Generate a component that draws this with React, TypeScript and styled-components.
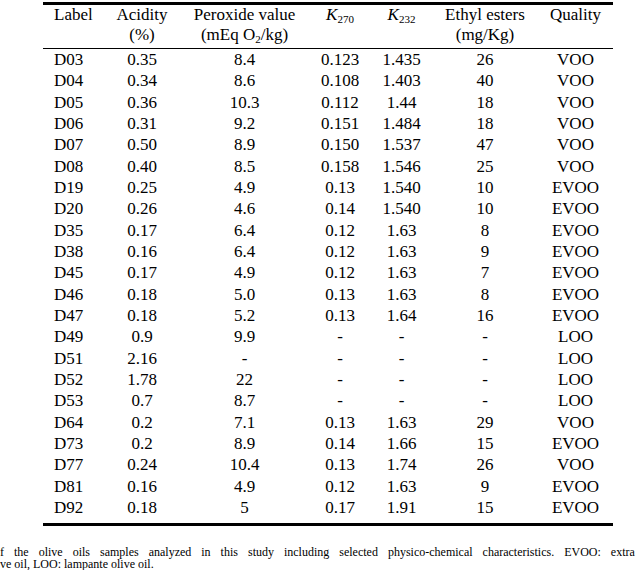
import styled, { createGlobalStyle } from "styled-components";

const GlobalStyle = createGlobalStyle`
  html, body {
    margin: 0;
    padding: 0;
    background: #fff;
  }
  body {
    width: 640px;
    height: 577px;
    overflow: hidden;
    font-family: "Liberation Serif", "DejaVu Serif", serif;
    color: #000;
  }
`;

type Row = [string, string, string, string, string, string, string];

const rows: Row[] = [
  ["D03", "0.35", "8.4", "0.123", "1.435", "26", "VOO"],
  ["D04", "0.34", "8.6", "0.108", "1.403", "40", "VOO"],
  ["D05", "0.36", "10.3", "0.112", "1.44", "18", "VOO"],
  ["D06", "0.31", "9.2", "0.151", "1.484", "18", "VOO"],
  ["D07", "0.50", "8.9", "0.150", "1.537", "47", "VOO"],
  ["D08", "0.40", "8.5", "0.158", "1.546", "25", "VOO"],
  ["D19", "0.25", "4.9", "0.13", "1.540", "10", "EVOO"],
  ["D20", "0.26", "4.6", "0.14", "1.540", "10", "EVOO"],
  ["D35", "0.17", "6.4", "0.12", "1.63", "8", "EVOO"],
  ["D38", "0.16", "6.4", "0.12", "1.63", "9", "EVOO"],
  ["D45", "0.17", "4.9", "0.12", "1.63", "7", "EVOO"],
  ["D46", "0.18", "5.0", "0.13", "1.63", "8", "EVOO"],
  ["D47", "0.18", "5.2", "0.13", "1.64", "16", "EVOO"],
  ["D49", "0.9", "9.9", "-", "-", "-", "LOO"],
  ["D51", "2.16", "-", "-", "-", "-", "LOO"],
  ["D52", "1.78", "22", "-", "-", "-", "LOO"],
  ["D53", "0.7", "8.7", "-", "-", "-", "LOO"],
  ["D64", "0.2", "7.1", "0.13", "1.63", "29", "VOO"],
  ["D73", "0.2", "8.9", "0.14", "1.66", "15", "EVOO"],
  ["D77", "0.24", "10.4", "0.13", "1.74", "26", "VOO"],
  ["D81", "0.16", "4.9", "0.12", "1.63", "9", "EVOO"],
  ["D92", "0.18", "5", "0.17", "1.91", "15", "EVOO"],
];

const colWidths = [61, 76, 129, 62, 61, 106, 75];

const serif = `"Liberation Serif", "DejaVu Serif", serif`;

const Page = styled.div`
  padding-top: 2px;
  font-family: ${serif};
`;

const Table = styled.table`
  margin-left: 43px;
  width: 570px;
  table-layout: fixed;
  border-collapse: collapse;
  border-top: 3px solid #000;
  border-bottom: 3px solid #000;
  font-family: ${serif};
  font-size: 17px;
  color: #000;
`;

const Head = styled.thead`
  border-bottom: 1px solid #000;
`;

const HeadCell = styled.th<{ $left?: boolean }>`
  font-weight: normal;
  font-family: ${serif};
  text-align: ${(p) => (p.$left ? "left" : "center")};
  vertical-align: top;
  padding: 0 0 3px ${(p) => (p.$left ? "11px" : "0")};
  line-height: 20px;
  white-space: nowrap;
`;

const Cell = styled.td<{ $left?: boolean }>`
  font-family: ${serif};
  text-align: ${(p) => (p.$left ? "left" : "center")};
  padding: 0 0 0 ${(p) => (p.$left ? "11px" : "0")};
  height: 21.33px;
  line-height: 21.33px;
  white-space: nowrap;
`;

const Body = styled.tbody`
  tr:last-child td {
    padding-bottom: 5px;
  }
`;

const KSymbol = styled.i`
  font-style: italic;
`;

const Sub = styled.sub`
  font-size: 11px;
  line-height: 0;
  vertical-align: -3px;
`;

const Caption = styled.div`
  margin-top: 20px;
  font-family: ${serif};
  font-size: 12px;
  line-height: 12px;
  overflow: hidden;
  width: 640px;
`;

const CaptionLine = styled.div<{ $spread?: number }>`
  white-space: nowrap;
  word-spacing: ${(p) => p.$spread ?? 0}px;
`;

const App = () => {
  return (
    <Page>
      <GlobalStyle />
      <Table>
        <colgroup>
          {colWidths.map((w, i) => (
            <col key={i} style={{ width: w }} />
          ))}
        </colgroup>
        <Head>
          <tr>
            <HeadCell $left>Label</HeadCell>
            <HeadCell>
              Acidity
              <br />
              (%)
            </HeadCell>
            <HeadCell>
              Peroxide value
              <br />
              (mEq O<Sub>2</Sub>/kg)
            </HeadCell>
            <HeadCell>
              <KSymbol>K</KSymbol>
              <Sub>270</Sub>
            </HeadCell>
            <HeadCell>
              <KSymbol>K</KSymbol>
              <Sub>232</Sub>
            </HeadCell>
            <HeadCell>
              Ethyl esters
              <br />
              (mg/Kg)
            </HeadCell>
            <HeadCell>Quality</HeadCell>
          </tr>
        </Head>
        <Body>
          {rows.map((r) => (
            <tr key={r[0]}>
              {r.map((v, i) => (
                <Cell key={i} $left={i === 0}>
                  {v}
                </Cell>
              ))}
            </tr>
          ))}
        </Body>
      </Table>
      <Caption>
        <CaptionLine $spread={7}>
          f the olive oils samples analyzed in this study including selected physico-chemical characteristics. EVOO: extra virgin olive oil, VOO: virgin
        </CaptionLine>
        <CaptionLine>ve oil, LOO: lampante olive oil.</CaptionLine>
      </Caption>
    </Page>
  );
};

export default App;
